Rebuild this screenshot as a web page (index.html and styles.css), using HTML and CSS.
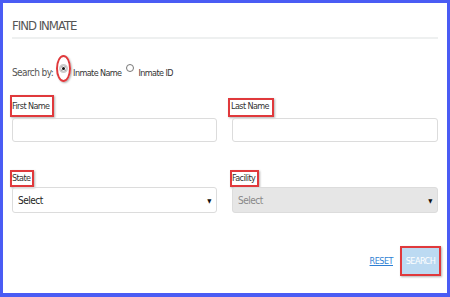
FILE: index.html
```html
<!DOCTYPE html>
<html lang="en">
<head>
  <meta charset="UTF-8">
  <title>Find Inmate</title>
  <link rel="stylesheet" href="styles.css">
</head>
<body>
  <div class="panel">
    <h1 class="title">FIND INMATE</h1>

    <div class="search-by">
      <span class="search-label">Search by:</span>
      <span class="radio-mark">
        <span class="radio checked"></span>
      </span>
      <span class="radio-text">Inmate Name</span>
      <span class="radio"></span>
      <span class="radio-text">Inmate ID</span>
    </div>

    <div class="fields">
      <div class="field">
        <span class="label tall">First Name</span>
        <div class="input"></div>
      </div>
      <div class="field">
        <span class="label mid">Last Name</span>
        <div class="input"></div>
      </div>
      <div class="field">
        <span class="label">State</span>
        <div class="select">
          <span>Select</span>
          <span class="arrow">&#9660;</span>
        </div>
      </div>
      <div class="field">
        <span class="label">Facility</span>
        <div class="select disabled">
          <span>Select</span>
          <span class="arrow">&#9660;</span>
        </div>
      </div>
    </div>

    <div class="actions">
      <a class="reset" href="#">RESET</a>
      <span class="btn-mark">
        <button class="search-btn">SEARCH</button>
      </span>
    </div>
  </div>
</body>
</html>
```

FILE: styles.css
```css
/* Basic styling */
body {
  margin: 0;
  padding: 0;
  background-color: #fff;
  font-family: "DejaVu Sans Condensed", "DejaVu Sans", sans-serif;
  color: #333;
}
.panel {
  box-sizing: border-box;
  width: 450px;
  height: 297px;
  border: 3px solid #4a5cf4; /* blue frame */
  border-bottom-width: 4px;
  padding: 0 9px;
}
.title {
  margin: 14px 0 0;
  padding-bottom: 2px;
  font-size: 13px;
  line-height: 18px;
  font-weight: normal;
  letter-spacing: -1px;
  color: #555;
  border-bottom: 2px solid #eef0f0;
}

/* search by row */
.search-by {
  display: flex;
  align-items: center;
  height: 27px;
  margin-top: 16px;
  font-size: 9px;
  line-height: 12px;
  letter-spacing: -0.6px;
}
.search-label {
  align-self: flex-end;
  margin: 0 3px 3px 0;
  font-size: 10px;
  color: #555;
}
.radio-mark {
  box-sizing: border-box;
  display: flex;
  align-items: center;
  justify-content: center;
  width: 15px;
  height: 27px;
  border: 2px solid #e0393c;
  border-radius: 50%;
  box-shadow: 1px 1px 2px rgba(0, 0, 0, 0.3);
  margin-right: 2px;
}
.radio {
  box-sizing: border-box;
  width: 8px;
  height: 8px;
  border: 1px solid #777;
  border-radius: 50%;
  margin: 0 4px 2px 5px;
  background: #fff;
}
.radio.checked {
  width: 9px;
  height: 9px;
  margin: 0;
  border: 2px solid #ccc;
  background: #111;
  box-shadow: inset 0 0 0 1px #fff;
}
.radio-text {
  align-self: flex-end;
  margin-bottom: 3px;
  color: #333;
}

/* form fields */
.fields {
  display: grid;
  grid-template-columns: 205px 206px;
  column-gap: 15px;
  row-gap: 28px;
  margin-top: 13px;
}
.field {
  display: flex;
  flex-direction: column;
  align-items: flex-start;
}
.label {
  margin-left: -2px;
  padding: 0 2px 0 0;
  font-size: 9px;
  line-height: 13px;
  letter-spacing: -0.6px;
  color: #333;
  border: 2px solid #e0393c;
  box-shadow: 1px 1px 2px rgba(0, 0, 0, 0.3);
}
.label.tall {
  padding: 3px 3px 2px 0;
}
.label.mid {
  margin: 3px 0 0 -4px;
  padding: 0 3px 2px 1px;
}
.input {
  box-sizing: border-box;
  align-self: stretch;
  height: 24px;
  margin-top: 1px;
  border: 1px solid #dcdcdc;
  border-radius: 3px;
}
.select {
  box-sizing: border-box;
  align-self: stretch;
  display: flex;
  align-items: center;
  justify-content: space-between;
  height: 26px;
  padding: 0 5px;
  border: 1px solid #dcdcdc;
  border-radius: 3px;
  font-size: 10px;
  letter-spacing: -0.5px;
  color: #222;
}
.select.disabled {
  background-color: #e6e6e6;
  color: #888;
}
.arrow {
  font-size: 6px;
  color: #111;
}

/* buttons */
.actions {
  display: flex;
  justify-content: flex-end;
  align-items: center;
  margin-top: 33px;
  margin-right: -3px;
}
.reset {
  margin-right: 7px;
  font-size: 9px;
  letter-spacing: -0.5px;
  color: #2f7fd3;
  text-decoration: underline;
}
.btn-mark {
  display: block;
  border: 2px solid #e0393c;
  box-shadow: 1px 1px 2px rgba(0, 0, 0, 0.3);
}
.search-btn {
  display: block;
  width: 37px;
  height: 26px;
  padding: 0;
  border: none;
  background-color: #bcdaf2;
  color: #fff;
  font-family: inherit;
  font-size: 9px;
  letter-spacing: -0.5px;
}
```
